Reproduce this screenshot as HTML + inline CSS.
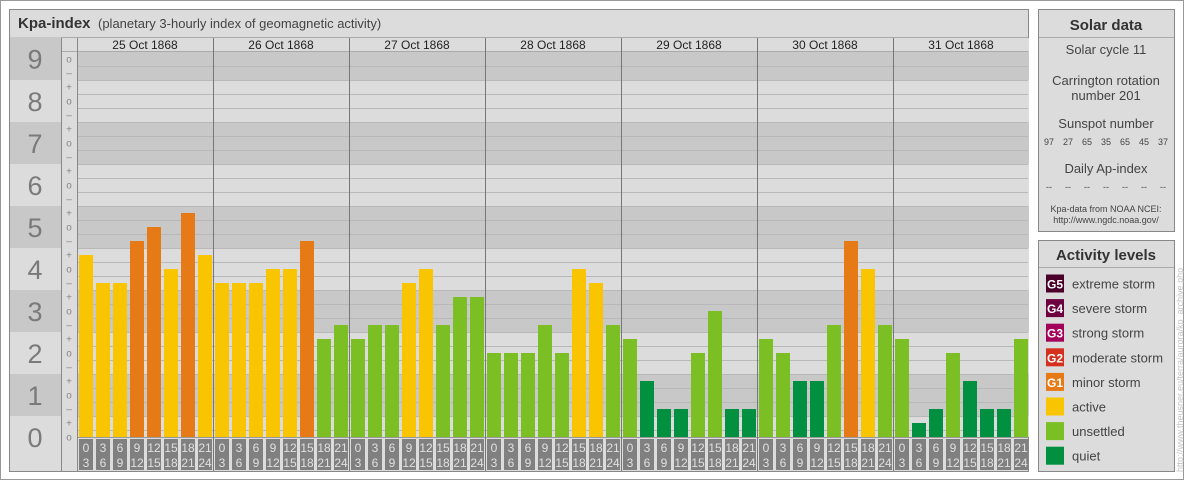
<!DOCTYPE html>
<html><head><meta charset="utf-8"><style>
html,body{margin:0;padding:0;background:#fff;}
svg{display:block;font-family:"Liberation Sans",Arial,sans-serif;}
</style></head><body>
<svg id="s" width="1184" height="480" xmlns="http://www.w3.org/2000/svg">
<rect x="0.5" y="0.5" width="1183" height="479" fill="#fff" stroke="#999"/>
<rect x="9.5" y="9.5" width="1019" height="462" fill="#dcdcdc" stroke="#888"/>
<line x1="10" y1="37.5" x2="1028" y2="37.5" stroke="#aaa"/>
<text x="18" y="28" font-size="15" font-weight="bold" fill="#333">Kpa-index</text>
<text x="98" y="28" font-size="13" fill="#444">(planetary 3-hourly index of geomagnetic activity)</text>
<g id="g"></g>
<rect x="1038.5" y="9.5" width="136" height="222" fill="#dcdcdc" stroke="#888"/>
<line x1="1039" y1="37.5" x2="1174" y2="37.5" stroke="#aaa"/>
<text x="1106" y="30" font-size="15" font-weight="bold" fill="#333" text-anchor="middle">Solar data</text>
<g font-size="13" fill="#444" text-anchor="middle">
<text x="1106" y="54">Solar cycle 11</text>
<text x="1106" y="85">Carrington rotation</text>
<text x="1106" y="100">number 201</text>
<text x="1106" y="128">Sunspot number</text>
<text x="1106" y="173">Daily Ap-index</text>
</g>
<g font-size="9" fill="#444" text-anchor="middle">
<text x="1049" y="145">97</text><text x="1068" y="145">27</text><text x="1087" y="145">65</text><text x="1106" y="145">35</text><text x="1125" y="145">65</text><text x="1144" y="145">45</text><text x="1163" y="145">37</text>
<text x="1049" y="190">--</text><text x="1068" y="190">--</text><text x="1087" y="190">--</text><text x="1106" y="190">--</text><text x="1125" y="190">--</text><text x="1144" y="190">--</text><text x="1163" y="190">--</text>
<text x="1106" y="212">Kpa-data from NOAA NCEI:</text>
<text x="1106" y="223">http://www.ngdc.noaa.gov/</text>
</g>
<rect x="1038.5" y="240.5" width="136" height="231" fill="#dcdcdc" stroke="#888"/>
<line x1="1039" y1="267.5" x2="1174" y2="267.5" stroke="#aaa"/>
<text x="1106" y="260" font-size="15" font-weight="bold" fill="#333" text-anchor="middle">Activity levels</text>
<g id="leg"></g>
<text transform="translate(1183,472) rotate(-90)" font-size="9" fill="#c4c4c4">http://www.theusner.eu/terra/aurora/kp_archive.php</text>
</svg>
<script>
var NS="http://www.w3.org/2000/svg",g=document.getElementById('g');
function el(t,a,txt,p){var e=document.createElementNS(NS,t);for(var k in a)e.setAttribute(k,a[k]);if(txt!=null)e.textContent=txt;(p||g).appendChild(e);return e;}
for(var N=0;N<=9;N++){
 var y1=430-14*(3*N+1),y2=430-14*(3*N-2);
 if(N==9)y1=37; if(N==0)y2=437;
 var c=(N%2)?'#c8c8c8':'#dcdcdc';
 el('rect',{x:77,y:Math.max(y1,51),width:952,height:y2-Math.max(y1,51),fill:c});
 var ny1=y1,ny2=(N==0)?471:y2;
 el('rect',{x:10,y:ny1,width:51,height:ny2-ny1,fill:c});
 var cy=(N==0)?437:(y1+y2)/2;
 el('text',{x:35,y:cy+10,'font-size':27,fill:'#7a7a7a','text-anchor':'middle'},N);
}
el('rect',{x:77,y:38,width:952,height:13,fill:'#dcdcdc'});
el('line',{x1:61,y1:51.5,x2:1028,y2:51.5,stroke:'#aaa'});
for(var k=0;k<=26;k++){var y=430-14*k+0.5;el('line',{x1:77,y1:y,x2:1028,y2:y,stroke:'#b8b8b8'});}
for(var n=0;n<=27;n++){var s=['o','+','\u2013'][n%3];el('text',{x:69,y:437-14*n+3.5,'font-size':10,fill:'#888','text-anchor':'middle'},s);}
var data=[[13,11,11,14,15,12,16,13],[11,11,11,12,12,14,7,8],[7,8,8,11,12,8,10,10],[6,6,6,8,6,12,11,8],[7,4,2,2,6,9,2,2],[7,6,4,4,8,14,12,8],[7,1,2,6,4,2,2,7]];
var days=['25','26','27','28','29','30','31'];
for(var d=0;d<7;d++){
 var x0=77+136*d;
 el('text',{x:x0+68,y:49,'font-size':12,fill:'#222','text-anchor':'middle'},days[d]+' Oct 1868');
 for(var i=0;i<8;i++){
  var n=data[d][i],c=n<=4?'#009040':n<=10?'#7cbf24':n<=13?'#f8c500':'#e57a17';
  var bx=x0+2+17*i;
  el('rect',{x:bx,y:437-14*n,width:14,height:14*n,fill:c});
  el('rect',{x:bx,y:439,width:14,height:31,fill:'#808080'});
  el('text',{x:bx+7,y:452,'font-size':12,fill:'#e0e0e0','text-anchor':'middle'},3*i);
  el('text',{x:bx+7,y:467,'font-size':12,fill:'#e0e0e0','text-anchor':'middle'},3*i+3);
 }
}
el('line',{x1:77,y1:437.5,x2:1028,y2:437.5,stroke:'#999'});
el('line',{x1:61.5,y1:38,x2:61.5,y2:471,stroke:'#888'});
el('line',{x1:77.5,y1:38,x2:77.5,y2:471,stroke:'#888'});
for(var d=1;d<7;d++){var x=77+136*d+0.5;el('line',{x1:x,y1:38,x2:x,y2:471,stroke:'#777'});}
var leg=document.getElementById('leg');
var L=[['G5','#4a0028','extreme storm'],['G4','#6e0040','severe storm'],['G3','#a3005c','strong storm'],['G2','#d4301e','moderate storm'],['G1','#e57a17','minor storm'],['','#f8c500','active'],['','#7cbf24','unsettled'],['','#009040','quiet']];
for(var i=0;i<8;i++){var y=274.5+24.6*i;
 el('rect',{x:1046,y:y,width:18,height:18,fill:L[i][1]},null,leg);
 if(L[i][0])el('text',{x:1055,y:y+14,'font-size':12,fill:'#fff','text-anchor':'middle','font-weight':'bold'},L[i][0],leg);
 el('text',{x:1072,y:y+14,'font-size':13,fill:'#444'},L[i][2],leg);
}
</script>
</body></html>
